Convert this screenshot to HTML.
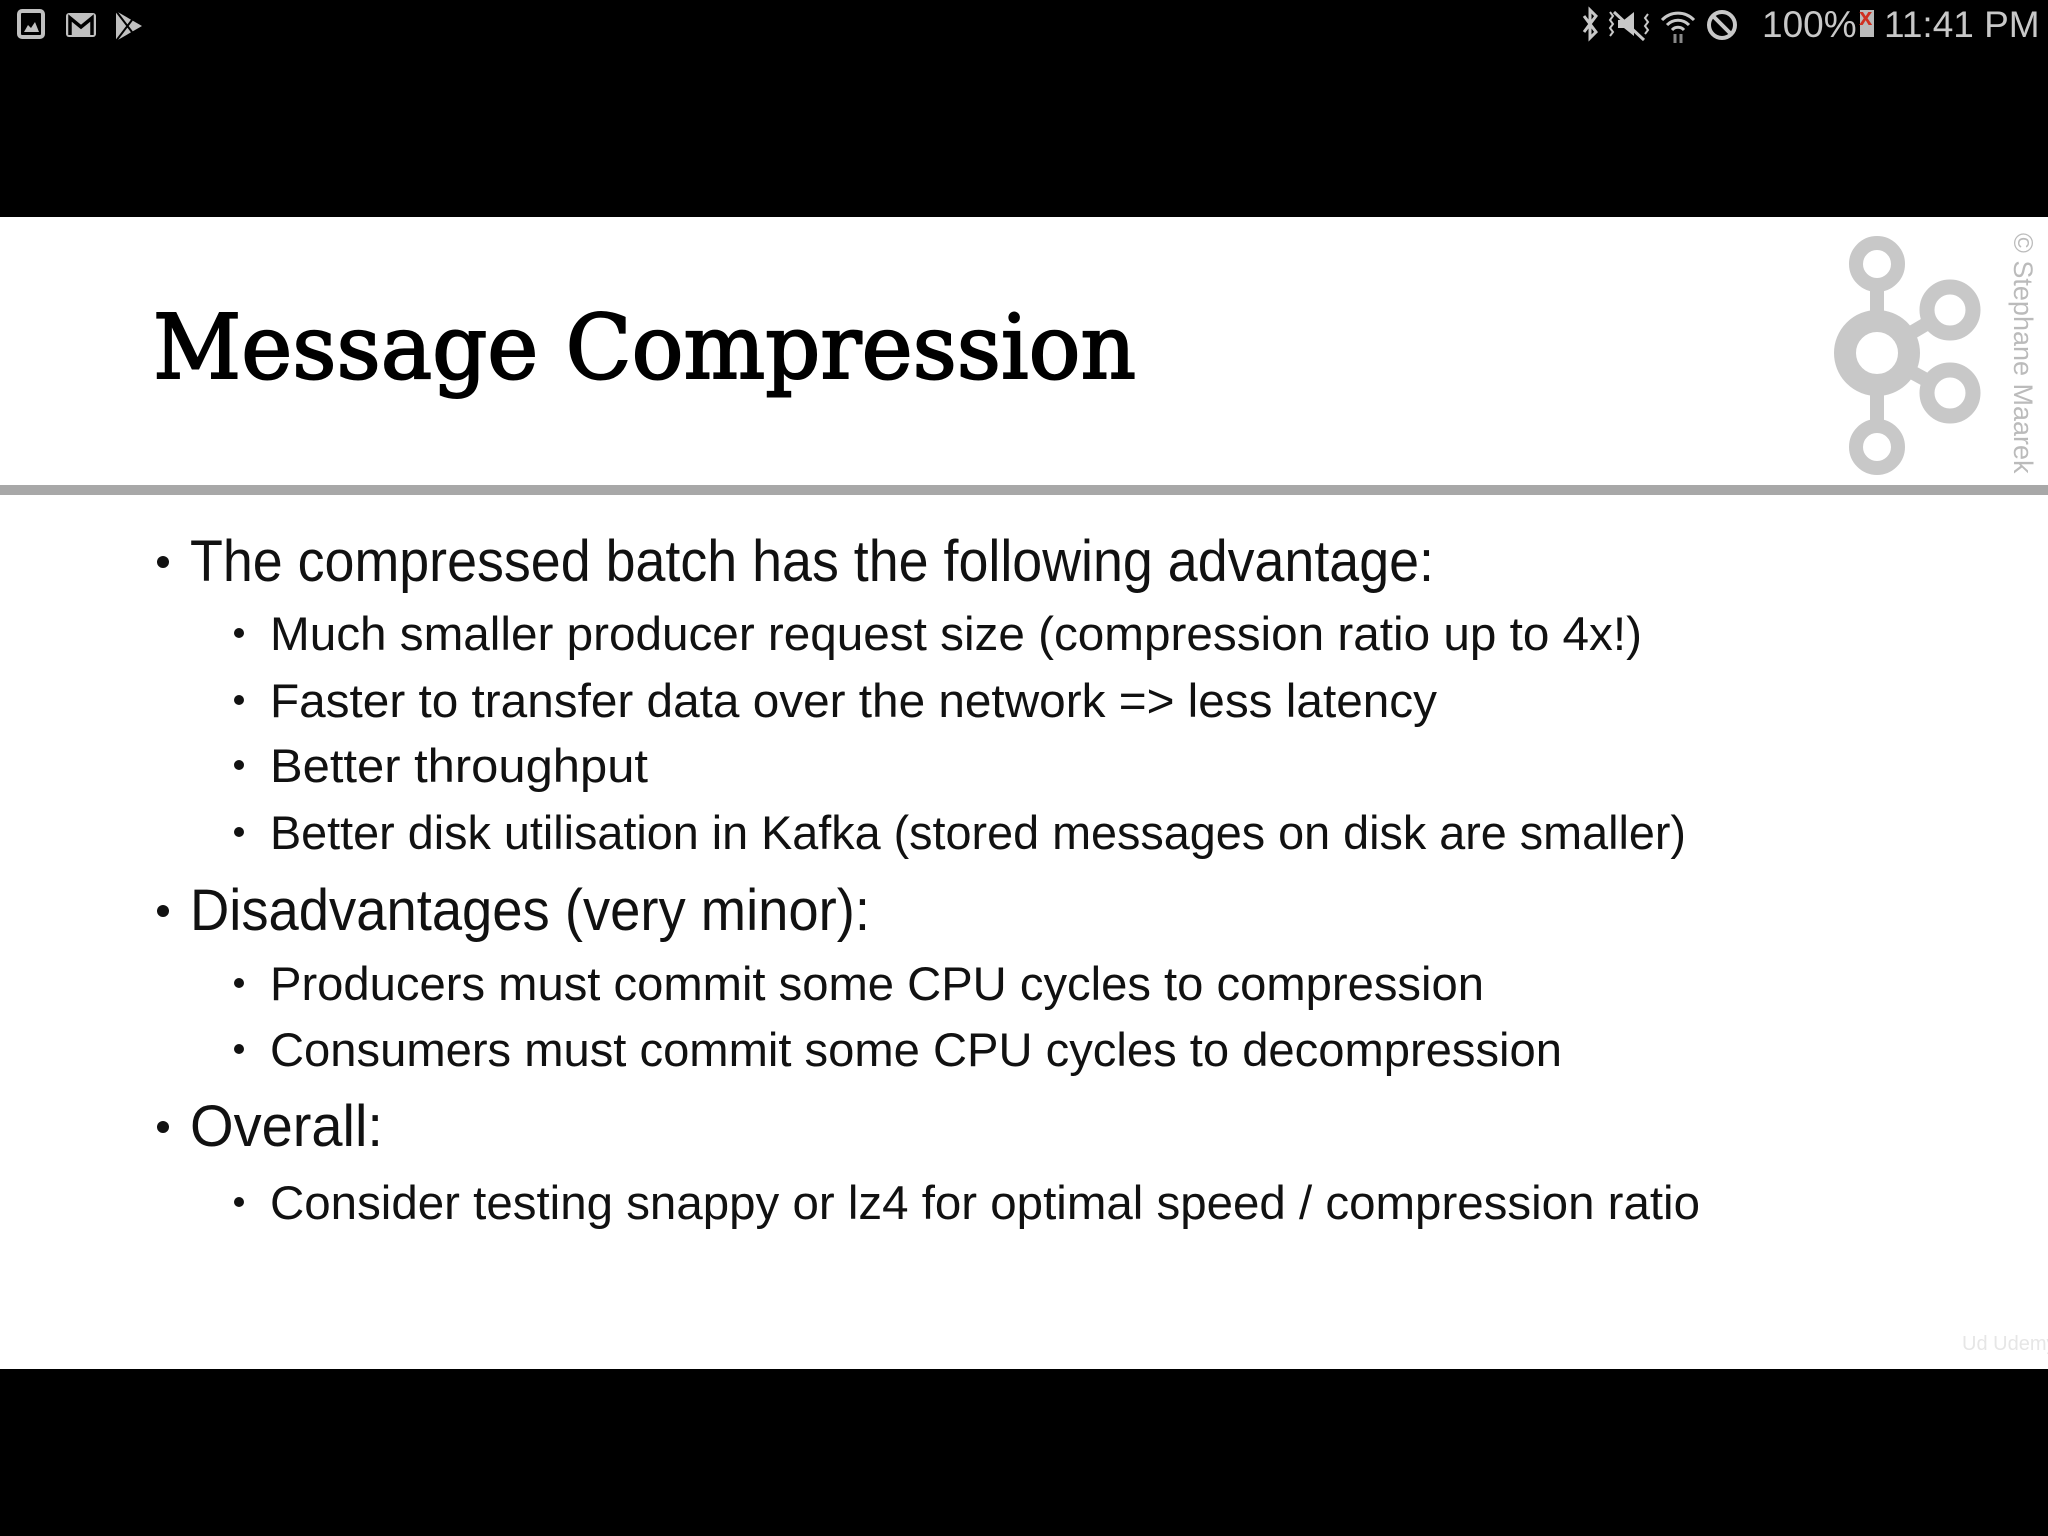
<!DOCTYPE html>
<html><head><meta charset="utf-8"><style>
html,body{margin:0;padding:0;background:#000;}
body{width:2048px;height:1536px;position:relative;overflow:hidden;font-family:"Liberation Sans",sans-serif;}
.slide{position:absolute;left:0;top:217px;width:2048px;height:1152px;background:#fff;}
.t{position:absolute;white-space:nowrap;line-height:1;transform-origin:0 0;color:#111;}
.l1{font-size:58px;}
.l2{font-size:47px;}
.b{position:absolute;width:12px;height:12px;border-radius:50%;background:#111;}
.sb{position:absolute;color:#c8c8c8;font-size:37px;top:6px;line-height:1;}
</style></head><body>
<svg style="position:absolute;left:16px;top:8px" width="150" height="34" viewBox="0 0 150 34">
  <rect x="3" y="3" width="24" height="26" rx="3" fill="none" stroke="#c0c0c0" stroke-width="4"/>
  <path d="M8 24 L12 17 L15 20 L19 14 L23 24 Z" fill="#c0c0c0"/>
  <rect x="50" y="5" width="30" height="24" rx="3" fill="#c0c0c0"/>
  <path d="M54 27 V10 L65 19 L76 10 V27" fill="none" stroke="#000" stroke-width="3.5"/>
  <path d="M100 3 L126 18 L100 33 Z" fill="#c0c0c0"/>
  <path d="M100 33 L116 12 M100 3 L116 24" stroke="#000" stroke-width="2"/>
</svg>
<svg style="position:absolute;left:1578px;top:6px" width="170" height="38" viewBox="0 0 170 38">
  <path d="M6 10 L18 26 L12 32 V4 L18 10 L6 26" fill="none" stroke="#c8c8c8" stroke-width="3"/>
  <path d="M40 14 H46 L56 6 V30 L46 22 H40 Z" fill="#c8c8c8"/>
  <path d="M36 6 L66 34" stroke="#c8c8c8" stroke-width="3"/>
  <path d="M32 6 l3 4 -3 4 3 4 -3 4 3 4 -3 4 M70 8 l-3 4 3 4 -3 4 3 4 -3 4" fill="none" stroke="#c8c8c8" stroke-width="2"/>
  <path d="M84 14 A22 22 0 0 1 116 14 M89 19 A15 15 0 0 1 111 19 M94 24 A8 8 0 0 1 106 24" fill="none" stroke="#c8c8c8" stroke-width="3"/>
  <path d="M97 28 v9 M103 28 v9" stroke="#888" stroke-width="3"/>
  <circle cx="144" cy="19" r="13" fill="none" stroke="#c8c8c8" stroke-width="4"/>
  <path d="M135 10 L153 28" stroke="#c8c8c8" stroke-width="4"/>
</svg>
<div class="sb" style="left:1762px">100%</div>
<div style="position:absolute;left:1860px;top:10px;width:14px;height:27px;background:#bbb"></div>
<div style="position:absolute;left:1859px;top:6px;font-size:24px;color:#d03020;font-weight:bold;line-height:1">x</div>
<div class="sb" style="left:1884px">11:41 PM</div>

<div class="slide"></div>
<div style="position:absolute;left:0;top:485px;width:2048px;height:10px;background:#a8a8a8"></div>

<svg style="position:absolute;left:1820px;top:225px" width="180" height="260" viewBox="1820 225 180 260">
  <path d="M1877 265 V447 M1877 353 L1950 310 M1877 353 L1950 393" stroke="#c8c8c8" stroke-width="14" fill="none"/>
  <g stroke="#c8c8c8" fill="#fff">
    <circle cx="1877" cy="264" r="21" stroke-width="14"/>
    <circle cx="1877" cy="353" r="32" stroke-width="22"/>
    <circle cx="1950" cy="310" r="23" stroke-width="15"/>
    <circle cx="1950" cy="393" r="23" stroke-width="15"/>
    <circle cx="1877" cy="447" r="21" stroke-width="14"/>
  </g>
</svg>
<div style="position:absolute;top:233px;transform:rotate(90deg);transform-origin:0 0;left:2036px;font-size:27px;color:#bbb;white-space:nowrap;line-height:1">© Stephane Maarek</div>
<div style="position:absolute;left:1962px;top:1334px;font-size:20px;color:#e6e6e6;line-height:1;white-space:nowrap">Ud Udemy</div>

<div class="t fit" data-w="983" style="left:153px;top:303px;font-family:'DejaVu Serif',serif;font-size:89px;color:#000;-webkit-text-stroke:2px #000">Message Compression</div>

<div class="b" style="left:157px;top:556px"></div>
<div class="t l1 fit" data-w="1244" style="left:190px;top:533px">The compressed batch has the following advantage:</div>
<div class="b" style="left:234px;top:628px;width:10px;height:10px"></div>
<div class="t l2 fit" data-w="1372" style="left:270px;top:610px">Much smaller producer request size (compression ratio up to 4x!)</div>
<div class="b" style="left:234px;top:695px;width:10px;height:10px"></div>
<div class="t l2 fit" data-w="1167" style="left:270px;top:677px">Faster to transfer data over the network =&gt; less latency</div>
<div class="b" style="left:234px;top:760px;width:10px;height:10px"></div>
<div class="t l2 fit" data-w="378" style="left:270px;top:742px">Better throughput</div>
<div class="b" style="left:234px;top:827px;width:10px;height:10px"></div>
<div class="t l2 fit" data-w="1416" style="left:270px;top:809px">Better disk utilisation in Kafka (stored messages on disk are smaller)</div>

<div class="b" style="left:157px;top:905px"></div>
<div class="t l1 fit" data-w="680" style="left:190px;top:882px">Disadvantages (very minor):</div>
<div class="b" style="left:234px;top:978px;width:10px;height:10px"></div>
<div class="t l2 fit" data-w="1214" style="left:270px;top:960px">Producers must commit some CPU cycles to compression</div>
<div class="b" style="left:234px;top:1044px;width:10px;height:10px"></div>
<div class="t l2 fit" data-w="1292" style="left:270px;top:1026px">Consumers must commit some CPU cycles to decompression</div>

<div class="b" style="left:157px;top:1121px"></div>
<div class="t l1 fit" data-w="193" style="left:190px;top:1098px">Overall:</div>
<div class="b" style="left:234px;top:1197px;width:10px;height:10px"></div>
<div class="t l2 fit" data-w="1430" style="left:270px;top:1179px">Consider testing snappy or lz4 for optimal speed / compression ratio</div>

<script>
document.querySelectorAll('.fit').forEach(function(e){
  var w=e.getBoundingClientRect().width, t=+e.getAttribute('data-w');
  if(w>0) e.style.transform='scaleX('+(t/w)+')';
});
</script>
</body></html>
